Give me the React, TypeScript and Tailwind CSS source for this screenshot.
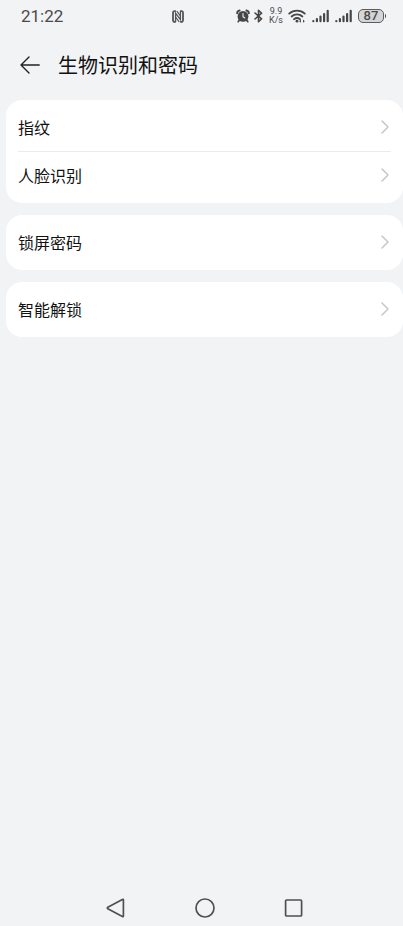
import React from 'react';

const groups = [
  ['指纹', '人脸识别'],
  ['锁屏密码'],
  ['智能解锁']
];

const NfcIcon = () => (
  <svg width="12" height="13" viewBox="0 0 12 13" fill="none" stroke="#555" strokeLinecap="round">
    <path d="M3.2 1.2C1.6 1 1 1.6 1 3v7c0 1.4.6 2 2.2 1.8M8.8 11.8c1.6.2 2.2-.4 2.2-1.8V3c0-1.4-.6-2-2.2-1.8" strokeWidth="1.8" />
    <path d="M3.6 11.4V3.2l4.8 6.4V1.4" strokeWidth="1.3" />
    <path d="M5 1.4l3.2 4.2M3.8 7.4L7 11.6" strokeWidth="1.1" />
  </svg>
);

const AlarmIcon = () => (
  <svg width="14" height="14" viewBox="0 0 14 14" fill="none">
    <circle cx="7" cy="7.4" r="5.4" fill="#464646" />
    <path d="M1.2 4.2C1.2 2.6 2 1.7 3.6 1.5M12.8 4.2c0-1.6-.8-2.5-2.4-2.7" stroke="#464646" strokeWidth="2" strokeLinecap="round" />
    <path d="M3.2 11.2l-1 1.5M10.8 11.2l1 1.5" stroke="#464646" strokeWidth="1.7" strokeLinecap="round" />
    <path d="M7 4.6v3.2l1.8 1.2" stroke="#f1f3f5" strokeWidth="1.1" strokeLinecap="round" />
  </svg>
);

const BluetoothIcon = () => (
  <svg width="9" height="14" viewBox="0 0 9 14" fill="none" stroke="#464646" strokeWidth="1.6" strokeLinejoin="round" strokeLinecap="round">
    <path d="M1 4l6.6 5.8L4.5 12.8V1.2l3.1 3L1 10" />
  </svg>
);

const WifiIcon = () => (
  <svg width="18" height="14" viewBox="0 0 18 14" fill="none" stroke="#464646" strokeWidth="1.8" strokeLinecap="round">
    <path d="M1.2 4.6c4.4-4 11.2-4 15.6 0" />
    <path d="M3.6 7.5c3.1-2.8 7.7-2.8 10.8 0" />
    <path d="M6 10.2c1.8-1.5 4.2-1.5 6 0" />
    <circle cx="9" cy="12.2" r="1.4" fill="#464646" stroke="none" />
    <path d="M11.2 12.2l1.8-1.6v3.2zM16.8 12.2L15 10.6v3.2z" fill="#464646" stroke="none" />
  </svg>
);

const SignalIcon = () => (
  <svg width="17" height="14" viewBox="0 0 17 14" stroke="#464646" strokeWidth="2.2" strokeLinecap="round">
    <path d="M1.3 12v.2M4.9 10.2v2M8.5 7.6v4.6M12.1 5v7.2M15.7 1.8v10.4" />
  </svg>
);

const ChevronIcon = () => (
  <svg width="8" height="14" viewBox="0 0 8 14" fill="none" stroke="#c6c7c8" strokeWidth="1.5" strokeLinecap="round" strokeLinejoin="round">
    <path d="M1 1l6 6-6 6" />
  </svg>
);

const StatusBar = () => (
  <div className="flex h-8 items-center pl-[21px] pr-[17px] text-[#4a4a4a]">
    <span className="w-[151px] font-[Roboto,sans-serif] text-[17px] leading-5">21:22</span>
    <NfcIcon />
    <div className="ml-auto flex items-center">
      <AlarmIcon />
      <span className="ml-1"><BluetoothIcon /></span>
      <div className="ml-[5px] w-4 text-center font-[Roboto,sans-serif] text-[9px] leading-[9px]">
        <div>9.9</div>
        <div>K/s</div>
      </div>
      <div className="ml-1 flex gap-[6px]">
        <WifiIcon />
        <SignalIcon />
        <SignalIcon />
      </div>
      <div className="ml-[6px] flex items-center gap-px">
        <span className="flex h-[14px] w-[26px] items-center justify-center rounded-[5px] border border-[#5c5c5c] bg-[#d3d5d6] font-[Roboto,sans-serif] text-[13px] leading-3 font-medium">
          87
        </span>
        <span className="h-1 w-px rounded-r bg-[#5c5c5c]" />
      </div>
    </div>
  </div>
);

const App = () => {
  return (
    <div className="flex min-h-screen w-full flex-col bg-[#f1f3f5] font-['Noto_Sans_CJK_SC',sans-serif]">
      <StatusBar />

      {/* Title bar */}
      <header className="flex h-[66px] items-center gap-[18px] pl-5">
        <button type="button" aria-label="返回">
          <svg width="20" height="18" viewBox="0 0 20 18" fill="none" stroke="#222" strokeWidth="1.4" strokeLinecap="round" strokeLinejoin="round">
            <path d="M19.2 9H1M9 1L1 9l8 8" />
          </svg>
        </button>
        <h1 className="text-xl leading-7 font-normal text-[#111]">生物识别和密码</h1>
      </header>

      {/* Settings groups */}
      <main className="flex flex-1 flex-col gap-3 pt-[2px] pl-[6px]">
        {groups.map((items) => (
          <ul key={items[0]} className="divide-y divide-[#ebebec] rounded-2xl bg-white px-3 py-1">
            {items.map((item) => (
              <li key={item}>
                <button type="button" className="flex h-[47px] w-full items-center justify-between pr-[2px] pb-[2px] text-left">
                  <span className="text-base leading-6 font-normal text-[#111]">{item}</span>
                  <ChevronIcon />
                </button>
              </li>
            ))}
          </ul>
        ))}
      </main>

      {/* System navigation */}
      <nav className="flex h-9 items-center justify-center gap-[65px] pl-[6px]">
        <button type="button" aria-label="后退" className="flex w-6 justify-center">
          <svg width="20" height="20" viewBox="0 0 20 20" fill="none" stroke="#505050" strokeWidth="1.7" strokeLinejoin="round">
            <path d="M17.4 2v16q0 1-1 .5L1.8 10.8q-1-.8 0-1.6L16.4 1.5q1-.5 1 .5z" />
          </svg>
        </button>
        <button type="button" aria-label="主页" className="flex w-6 justify-center">
          <svg width="20" height="20" viewBox="0 0 20 20" fill="none" stroke="#505050" strokeWidth="1.7">
            <circle cx="10" cy="10" r="9" />
          </svg>
        </button>
        <button type="button" aria-label="最近任务" className="flex w-6 justify-center">
          <svg width="20" height="20" viewBox="0 0 20 20" fill="none" stroke="#505050" strokeWidth="1.7">
            <rect x="1.6" y="2" width="16" height="16" rx="1" />
          </svg>
        </button>
      </nav>
    </div>
  );
};

export default App;
